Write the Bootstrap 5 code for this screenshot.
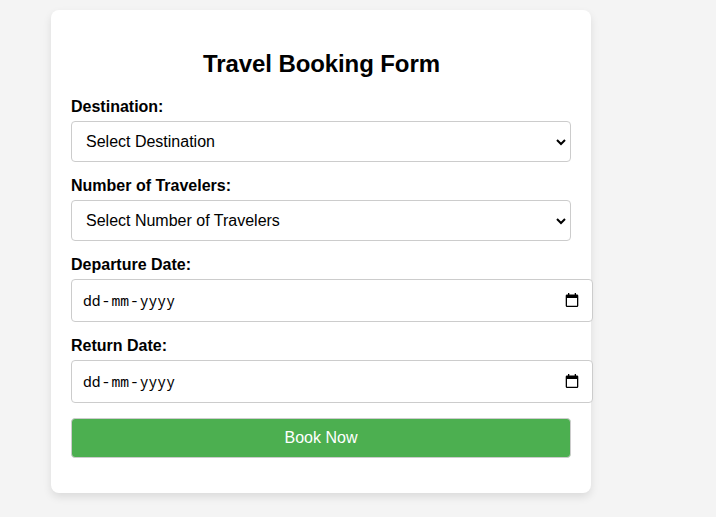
<!DOCTYPE html>
<html lang="en">
<head>
<meta charset="utf-8">
<title>Travel Booking Form</title>
<link href="https://cdn.jsdelivr.net/npm/bootstrap@5.3.0/dist/css/bootstrap.min.css" rel="stylesheet">
<style>
body{font-family:"Liberation Sans",Arial,sans-serif;background:#f4f4f4;color:#000;line-height:normal;padding:10px 0 20px 51px}
.booking{width:540px;height:483px;padding:20px;border-radius:8px;box-shadow:0 4px 8px rgba(0,0,0,.1)}
.booking h2{font-size:24px;line-height:28px;margin:20px 0;letter-spacing:-.1px;padding-left:1px}
.booking label{line-height:18px;margin-bottom:5px}
.field{border:1px solid #ccc;border-radius:4px;background:#fff;margin-bottom:15px;font-size:16px;color:#000}
.pick{height:41px;padding:0 4px 0 14px;appearance:none;background:#fff url("data:image/svg+xml,%3Csvg xmlns='http://www.w3.org/2000/svg' width='10' height='8' fill='none' stroke='%23000' stroke-width='2'%3E%3Cpath d='M1 2l4 4 4-4'/%3E%3C/svg%3E") no-repeat right 4px center}
.date{width:522px;height:43px;padding:0 13px 0 11px;font-family:"Noto Sans Mono","DejaVu Sans Mono",monospace;font-size:14.67px}
.date span{padding-bottom:2px}
.date i{font-style:normal;margin:0 1px}
.book{height:40px;border:1px solid #ccc;border-radius:4px;background:#4caf50;color:#fff;font-size:16px}
</style>
</head>
<body>
<form class="booking bg-white">
<h2 class="text-center fw-bold">Travel Booking Form</h2>
<label class="d-block fw-bold" for="dest">Destination:</label>
<select id="dest" class="field pick d-block w-100"><option>Select Destination</option></select>
<label class="d-block fw-bold" for="num">Number of Travelers:</label>
<select id="num" class="field pick d-block w-100"><option>Select Number of Travelers</option></select>
<label class="d-block fw-bold">Departure Date:</label>
<div class="field date d-flex align-items-center justify-content-between"><span>dd<i>-</i>mm<i>-</i>yyyy</span><svg width="14" height="15" viewBox="0 0 14 15"><path fill="#000" d="M2 1.5h1V0h1.3v1.5h5.4V0H11v1.5h1a1.3 1.3 0 0 1 1.3 1.3v10A1.3 1.3 0 0 1 12 14H2A1.3 1.3 0 0 1 .7 12.8v-10A1.3 1.3 0 0 1 2 1.5zM2 5v7.8h10V5z"/></svg></div>
<label class="d-block fw-bold">Return Date:</label>
<div class="field date d-flex align-items-center justify-content-between"><span>dd<i>-</i>mm<i>-</i>yyyy</span><svg width="14" height="15" viewBox="0 0 14 15"><path fill="#000" d="M2 1.5h1V0h1.3v1.5h5.4V0H11v1.5h1a1.3 1.3 0 0 1 1.3 1.3v10A1.3 1.3 0 0 1 12 14H2A1.3 1.3 0 0 1 .7 12.8v-10A1.3 1.3 0 0 1 2 1.5zM2 5v7.8h10V5z"/></svg></div>
<button type="button" class="book w-100">Book Now</button>
</form>
<script src="https://cdn.jsdelivr.net/npm/bootstrap@5.3.0/dist/js/bootstrap.bundle.min.js"></script>
</body>
</html>
